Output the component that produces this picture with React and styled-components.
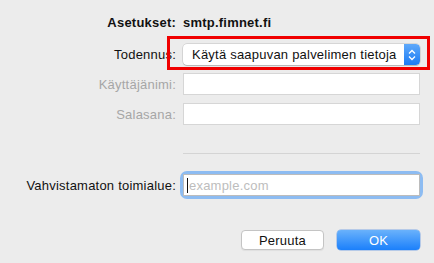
import React from "react";
import styled, { createGlobalStyle } from "styled-components";

const GlobalStyle = createGlobalStyle`
  html, body {
    margin: 0;
    padding: 0;
    background: #ececec;
  }
  body {
    font-family: "Liberation Sans", Arial, sans-serif;
    font-size: 13px;
    letter-spacing: 0.22px;
    color: #111;
  }
`;

const Sheet = styled.div`
  width: 434px;
  height: 263px;
  padding-top: 14px;
  box-sizing: border-box;
  background: #ececec;
  overflow: hidden;
`;

const Row = styled.div`
  display: grid;
  grid-template-columns: 176px 237px;
  column-gap: 7px;
  align-items: center;
  margin-top: ${(p) => p.$top || 0}px;
`;

const Label = styled.div`
  text-align: right;
  color: ${(p) => (p.$disabled ? "#a6a6a6" : "#111")};
  font-weight: ${(p) => (p.$bold ? "bold" : "normal")};
  line-height: 17px;
  white-space: nowrap;
`;

const Value = styled.div`
  font-weight: bold;
  line-height: 17px;
`;

const SelectWrap = styled.div`
  position: relative;
`;

const Highlight = styled.div`
  position: absolute;
  left: -16px;
  right: -10px;
  top: -8px;
  bottom: -5px;
  border: 3px solid #f00000;
  pointer-events: none;
`;

const Select = styled.div`
  height: 21px;
  box-sizing: border-box;
  display: flex;
  align-items: center;
  background: #fff;
  border-radius: 4px;
  box-shadow: 0 0 0 0.5px rgba(0, 0, 0, 0.18), 0 1px 1px rgba(0, 0, 0, 0.15);
  padding-left: 9px;
  font-size: 13px;
  overflow: hidden;
`;

const SelectText = styled.span`
  flex: 1;
  white-space: nowrap;
`;

const Stepper = styled.div`
  width: 16px;
  height: 21px;
  background: linear-gradient(#5fa9fa, #1b7bf4);
  display: flex;
  align-items: center;
  justify-content: center;
  border-radius: 0 4px 4px 0;
`;

const Input = styled.div`
  height: ${(p) => p.$h || 22}px;
  box-sizing: border-box;
  background: #fff;
  border: 1px solid ${(p) => (p.$disabled ? "#d6d6d6" : "#bcbcbc")};
  display: flex;
  align-items: center;
  padding-left: 3px;
`;

const FocusRing = styled.div`
  border-radius: 4px;
  box-shadow: 0 0 0 3px #8dbcf2;
`;

const Caret = styled.span`
  width: 1px;
  height: 15px;
  background: #111;
  margin-right: 1px;
`;

const Placeholder = styled.span`
  color: #bdbdbd;
`;

const Divider = styled.div`
  height: 1px;
  background: #d4d4d4;
`;

const Buttons = styled.div`
  display: flex;
  justify-content: flex-end;
  gap: 13px;
  padding-right: 14px;
  margin-top: 34px;
`;

const Button = styled.button`
  width: 83px;
  height: 20px;
  box-sizing: border-box;
  border-radius: 4px;
  font-family: inherit;
  font-size: 13px;
  letter-spacing: inherit;
  padding: 0;
  border: ${(p) => (p.$primary ? "none" : "1px solid #c4c4c4")};
  background: ${(p) =>
    p.$primary ? "linear-gradient(#6ab2fb, #1b80fb)" : "#fff"};
  color: ${(p) => (p.$primary ? "#fff" : "#111")};
  box-shadow: ${(p) =>
    p.$primary ? "0 0 0 0.5px rgba(20,100,220,0.5)" : "0 1px 1px rgba(0,0,0,0.06)"};
`;

const Chevrons = () => (
  <svg width="8" height="12" viewBox="0 0 8 12">
    <path d="M1 4.5 L4 1.5 L7 4.5" fill="none" stroke="#fff" strokeWidth="1.3" />
    <path d="M1 7.5 L4 10.5 L7 7.5" fill="none" stroke="#fff" strokeWidth="1.3" />
  </svg>
);

export default function App() {
  return (
    <>
      <GlobalStyle />
      <Sheet>
        <Row>
          <Label $bold>Asetukset:</Label>
          <Value>smtp.fimnet.fi</Value>
        </Row>
        <Row $top={13}>
          <Label>Todennus:</Label>
          <SelectWrap>
            <Select>
              <SelectText>Käytä saapuvan palvelimen tietoja</SelectText>
              <Stepper>
                <Chevrons />
              </Stepper>
            </Select>
            <Highlight />
          </SelectWrap>
        </Row>
        <Row $top={8}>
          <Label $disabled>Käyttäjänimi:</Label>
          <Input $disabled />
        </Row>
        <Row $top={8}>
          <Label $disabled>Salasana:</Label>
          <Input $disabled />
        </Row>
        <Row $top={28}>
          <span />
          <Divider />
        </Row>
        <Row $top={20}>
          <Label>Vahvistamaton toimialue:</Label>
          <FocusRing>
            <Input>
              <Caret />
              <Placeholder>example.com</Placeholder>
            </Input>
          </FocusRing>
        </Row>
        <Buttons>
          <Button>Peruuta</Button>
          <Button $primary>OK</Button>
        </Buttons>
      </Sheet>
    </>
  );
}
